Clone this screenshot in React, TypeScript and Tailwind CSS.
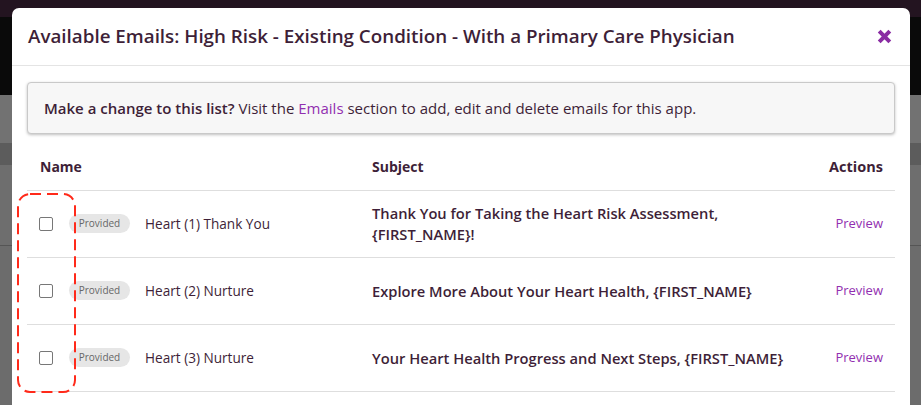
import React from "react";

const rows = [
  { name: "Heart (1) Thank You", subject: ["Thank You for Taking the Heart Risk Assessment,", "{FIRST_NAME}!"] },
  { name: "Heart (2) Nurture", subject: ["Explore More About Your Heart Health, {FIRST_NAME}"] },
  { name: "Heart (3) Nurture", subject: ["Your Heart Health Progress and Next Steps, {FIRST_NAME}"] },
];

export default function App() {
  return (
    <div
      className="relative w-[921px] h-[405px] overflow-hidden bg-[#6a6a6a]"
      style={{ fontFamily: "'Open Sans', Lato, sans-serif" }}
    >
      {/* page behind backdrop */}
      <div className="flex flex-col h-full">
        <div className="h-[17px] bg-[#231420]" />
        <div className="h-[78px] bg-[#0a0a0a]" />
        <div className="h-[48px] bg-[#727272]" />
        <div className="h-[22px] bg-[#5c5c5c]" />
        <div className="h-[80px] bg-[#6e6e6e]" />
        <div className="h-[1px] bg-[#555]" />
        <div className="flex-1 bg-[#6c6c6c]" />
      </div>

      {/* modal */}
      <div className="absolute left-[12px] top-[8px] w-[898px] h-[420px] bg-white rounded-t-[7px]">
        <div className="h-[58px] flex items-center justify-between pl-[16px] pr-[18px] border-b border-[#e4e4e4]">
          <h2 className="text-[18.8px] font-semibold text-[#3e1f38]">
            Available Emails: High Risk - Existing Condition - With a Primary Care Physician
          </h2>
          <svg width="15" height="15" viewBox="0 0 15 15">
            <path d="M2.2 2.2 L12.8 12.8 M12.8 2.2 L2.2 12.8" stroke="#8a2ca3" strokeWidth="4" strokeLinecap="butt" />
          </svg>
        </div>

        <div className="mx-[15px] mt-[16px] h-[52px] flex items-center pl-[16px] bg-[#f7f7f7] border border-[#c9c9c9] rounded-[4px] shadow-[0_1px_3px_rgba(0,0,0,0.25)] text-[15px] text-[#3e1f38]">
          <span>
            <span className="font-semibold">Make a change to this list?</span> Visit the{" "}
            <span className="text-[#922fb0]">Emails</span> section to add, edit and delete emails for this app.
          </span>
        </div>

        <div className="mx-[15px] text-[#3e1f38]">
          <div className="flex items-center pl-[13px] pr-[12px] pt-[23px] pb-[13px] border-b border-[#dedede] text-[14px] font-bold leading-[20px]">
            <div className="w-[332px]">Name</div>
            <div className="flex-1">Subject</div>
            <div className="text-[14.5px]">Actions</div>
          </div>
          {rows.map((r, i) => (
            <div
              key={i}
              className="flex items-center h-[67px] pl-[12px] pr-[12px] border-b border-[#dedede]"
            >
              <div className="w-[333px] flex items-center">
                <div className="w-[14px] h-[14px] border border-[#777] rounded-[2px] bg-white" />
                <span className="ml-[16px] h-[19px] w-[61px] flex items-center justify-center rounded-full bg-[#e6e6e6] text-[10px] text-[#666]">
                  Provided
                </span>
                <span className="ml-[15px] text-[13.6px]">{r.name}</span>
              </div>
              <div className="flex-1 text-[14.7px] font-semibold leading-[21px]">
                {r.subject.map((s, j) => (
                  <div key={j}>{s}</div>
                ))}
              </div>
              <div className="text-[13px] text-[#922fb0]">Preview</div>
            </div>
          ))}
        </div>

        <svg className="absolute left-[5px] top-[185px]" width="60" height="201" viewBox="0 0 60 201">
          <rect
            x="1"
            y="1"
            width="57"
            height="198"
            rx="12"
            fill="none"
            stroke="#ff2a1a"
            strokeWidth="2"
            strokeDasharray="11 6"
          />
        </svg>
      </div>
    </div>
  );
}
